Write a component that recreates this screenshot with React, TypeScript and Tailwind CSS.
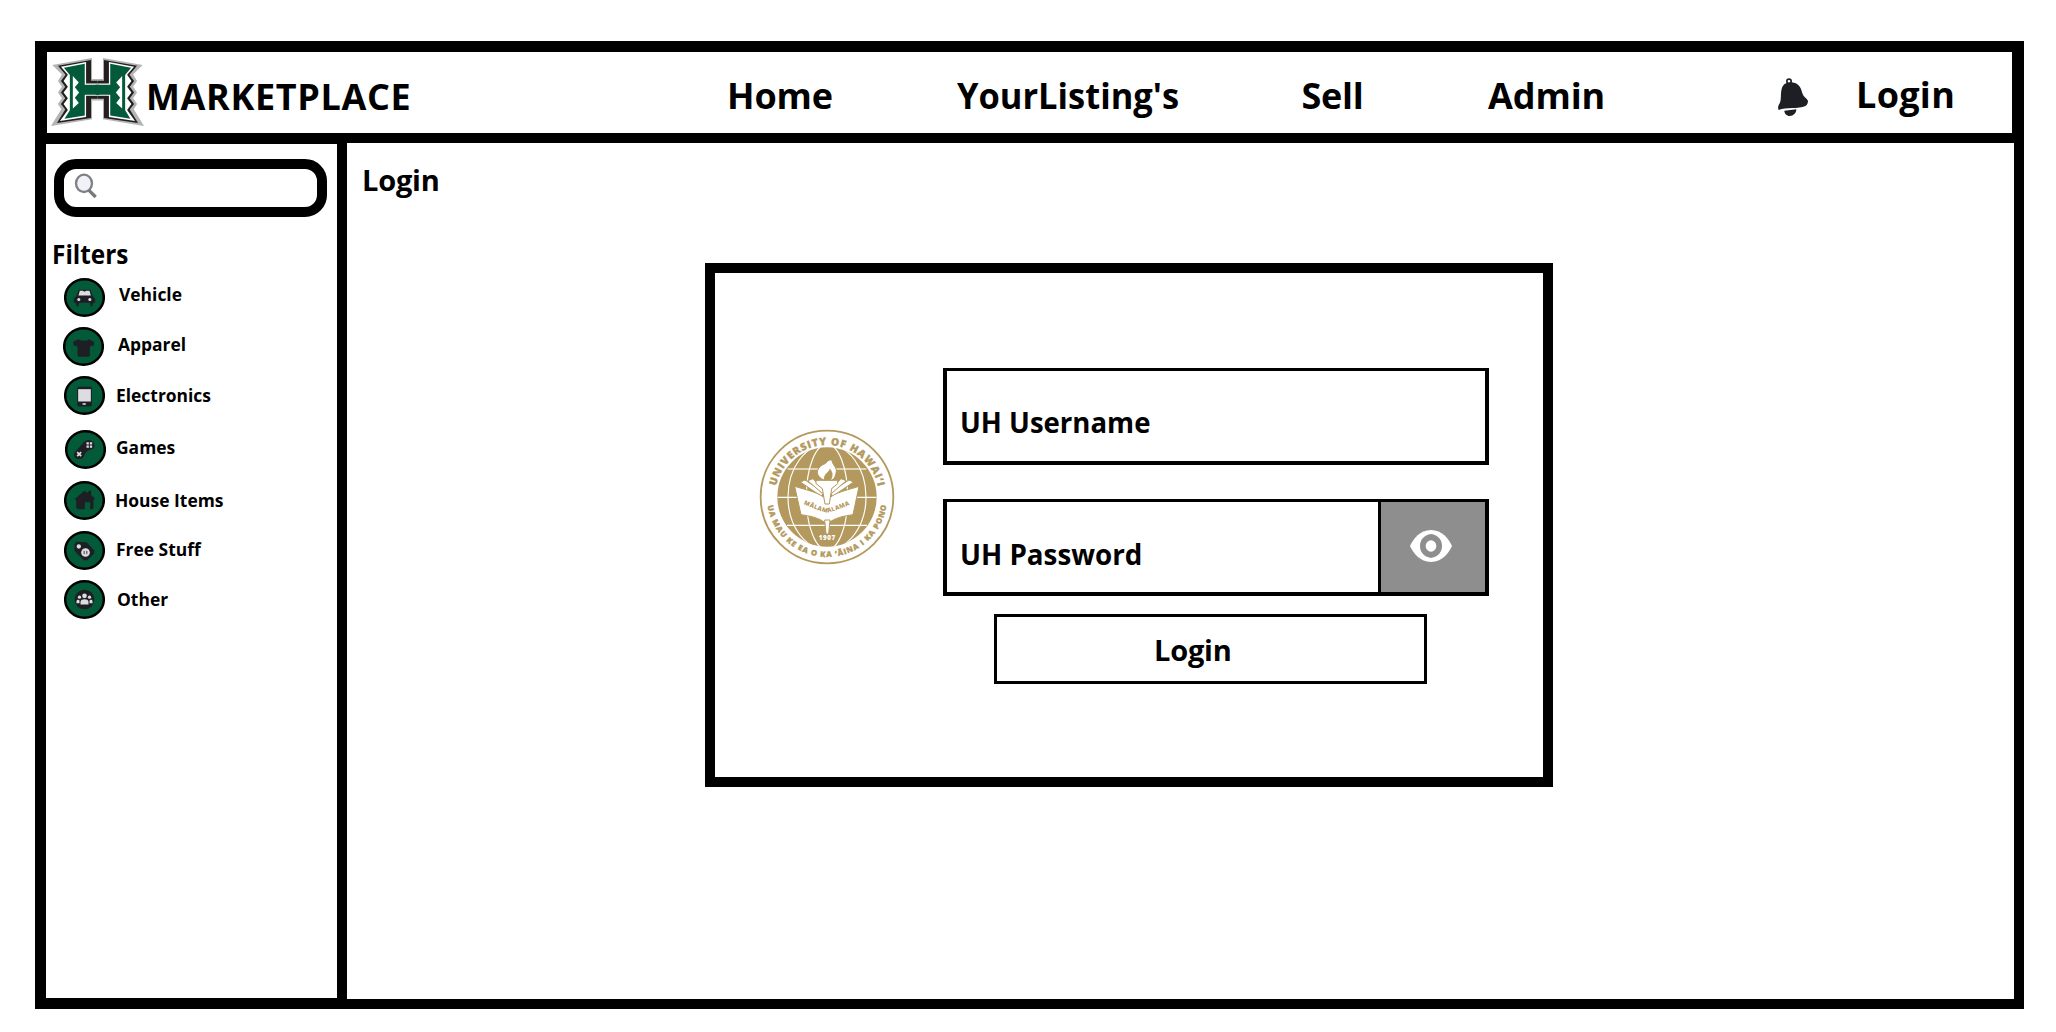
import type { ReactNode } from "react";

const INK = "#1e1f24";
const LIGHT = "#dcdde1";
const GOLD = "#b3995d";

function HawaiiLogo() {
  const half = (
    <>
      <path fill="#b4b4b4" d="M187 85 L67 106 L96 134 L84 154 L96 171 L84 188 L96 205 L84 222 L94 238 L63 288 L187 268 V212 H204 V148 H187 Z" />
      <path fill="#231f20" d="M184 91 L84 108 L107 135 L93 154 L106 171 L93 188 L106 205 L93 222 L106 239 L81 279 L184 264 V207 H204 V153 H184 Z" />
      <path fill="#fff" d="M169 97 L93 111 L114 135 L101 154 L114 171 L101 188 L114 205 L101 222 L114 240 L90 273 L169 261 V198 H204 V161 H169 Z" />
      <path fill="#025a3a" d="M165 102 L102 114 L120 136 V241 L104 266 L165 257 V195 H204 V165 H165 Z" />
      <path fill="#fff" d="M129 139 L147 158 L135 172 L148 188 L135 204 L147 219 L129 236 Z" />
    </>
  );
  return (
    <svg className="block h-[68px] w-[93px]" viewBox="63 85 281 203" preserveAspectRatio="none">
      {half}
      <g transform="translate(407 0) scale(-1 1)">{half}</g>
      <path fill="#025a3a" d="M198 165 H209 V195 H198 Z" />
    </svg>
  );
}

function Bell() {
  return (
    <svg className="block h-[39px] w-[32px]" viewBox="174 145 96 117">
      <circle cx="210" cy="155" r="6.5" fill="none" stroke={INK} strokeWidth="5" />
      <path fill={INK} d="M192 168 C197 160 208 158 219 158 C236 160 246 171 250 191 C253 201 262 205 267 213 C267 220 264 226 259 229 C239 239 201 232 179 241 C176 235 177 229 182 221 C189 208 182 184 192 168 Z" />
      <path fill={INK} d="M196 243 L232 239 C232 251 223 259 212 259 C203 258 196 252 196 243 Z" />
    </svg>
  );
}

function Magnifier() {
  return (
    <svg className="block h-[26px] w-[24px]" viewBox="133 428 72 78">
      <ellipse cx="163" cy="459" rx="24" ry="26" fill="#f1f2f7" stroke="#808086" strokeWidth="7" />
      <path d="M178 480 L198 500" stroke="#77777c" strokeWidth="10" />
    </svg>
  );
}

function Badge({ children }: { children: ReactNode }) {
  return (
    <svg className="block h-[39px] w-[41px] shrink-0" viewBox="-61.5 -58.5 123 117">
      <ellipse rx="58" ry="54.5" fill="#025a38" stroke="#000" strokeWidth="7.500" />
      {children}
    </svg>
  );
}

const car = (
  <>
    <path fill={INK} d="M-17 -23 H18 L25 -4 L32 4 V14 L26 17 L23 27 H19 L16 16 H-16 L-19 27 H-23 L-26 17 L-32 14 V4 L-25 -4 Z" />
    <path fill={LIGHT} d="M-14 -20 H-5 L0 -17 L5 -20 H15 L19 -6 H-18 Z" />
    <circle cx="-17" cy="6" r="4.5" fill={LIGHT} />
    <circle cx="16" cy="6" r="4.5" fill={LIGHT} />
  </>
);

const shirt = (
  <path fill={INK} d="M-15 -22 L-8 -18 H10 L17 -22 L31 -14 L32 -4 L19 0 V28 L15 31 H-14 L-18 28 V0 L-30 -4 L-31 -14 Z" />
);

const tablet = (
  <>
    <rect x="-22" y="-26" width="44" height="59" rx="5" fill={INK} />
    <rect x="-19" y="-19" width="38" height="37" fill={LIGHT} />
    <ellipse cx="-1" cy="25.500" rx="6" ry="2.500" fill="#fff" />
  </>
);

const gamepad = (
  <>
    <path fill={INK} d="M-30 6 L-8 -19 C-2 -26 5 -29 13 -28 C25 -26 28 -16 26 -7 C22 2 10 -1 3 7 C-3 13 -3 22 -10 27 C-18 30 -31 29 -34 20 C-35 15 -33 10 -30 6 Z" />
    <path stroke={LIGHT} strokeWidth="5" d="M-25 8 L-13 20 M-13 8 L-25 20" />
    <path fill={LIGHT} d="M3 -22 h7 v7 h-7 z M13 -22 h7 v7 h-7 z M3 -12 h7 v7 h-7 z M13 -12 h7 v7 h-7 z" />
  </>
);

const house = (
  <path fill={INK} d="M-30 -4 L0 -29 L8 -23 L14 -29 H20 V-16 L31 -6 L27 -2 V22 L24 26 H17 V5 H1 V26 H-20 L-25 21 V-2 Z" />
);

const tag = (
  <>
    <path fill={INK} d="M-30 -19 L-24 -26 L6 -25 L29 -1 V9 L8 29 H-2 L-30 1 Z" />
    <circle cx="-17" cy="-12" r="6.500" fill={LIGHT} />
    <circle cx="3" cy="6" r="13" fill={LIGHT} />
    <path stroke={INK} strokeWidth="2.500" fill="none" d="M-1 1 V11 M7 1 V11" />
  </>
);

const people = (
  <>
    <circle r="29.500" fill={INK} />
    <g fill={LIGHT}>
      <circle cx="0" cy="-11" r="7" />
      <circle cx="-15" cy="-7" r="5" />
      <circle cx="15" cy="-7" r="5" />
      <path d="M-12 15 V7 C-12 -3 12 -3 12 7 V15 Z" />
      <path d="M-24 11 V5 C-23 0 -17 0 -15 3 V11 Z" />
      <path d="M24 11 V5 C23 0 17 0 15 3 V11 Z" />
    </g>
  </>
);

const filters = [
  { label: "Vehicle", icon: car, row: "ml-[18px]", text: "ml-[14px]" },
  { label: "Apparel", icon: shirt, row: "ml-[17px] mt-[10px]", text: "ml-[14px] mt-px" },
  { label: "Electronics", icon: tablet, row: "ml-[18px] mt-[10px]", text: "ml-[11px] mt-[3px]" },
  { label: "Games", icon: gamepad, row: "ml-[19px] mt-[15px]", text: "ml-[10px] mt-[0.500px]" },
  { label: "House Items", icon: house, row: "ml-[18px] mt-[12px]", text: "ml-[10px] mt-[3px]" },
  { label: "Free Stuff", icon: tag, row: "ml-[18px] mt-[11px]", text: "ml-[11px] mt-[2px]" },
  { label: "Other", icon: people, row: "ml-[18px] mt-[10px]", text: "ml-[12px] mt-[3px]" },
];

function Seal() {
  return (
    <svg className="block h-[136px] w-[136px]" viewBox="26 27 408 408">
      <defs>
        <path id="seal-top" d="M74 231 A156 156 0 0 1 386 231" />
        <path id="seal-bottom" d="M50 231 A180 180 0 0 0 410 231" />
        <path id="seal-motto" d="M156 250 Q196 270 230 278 Q266 270 306 250" />
        <clipPath id="seal-disc"><circle cx="230" cy="231" r="149" /></clipPath>
      </defs>
      <circle cx="230" cy="231" r="199" fill="#fff" stroke={GOLD} strokeWidth="5.500" />
      <circle cx="230" cy="231" r="149" fill={GOLD} />
      <g clipPath="url(#seal-disc)" fill="none" stroke="#fff" strokeWidth="3.500">
        <path strokeWidth="5" stroke="#efe7d8" d="M112 147 H348" />
        <path d="M81 232 H379 M110 316 H350" />
        <ellipse cx="230" cy="231" rx="117" ry="158" />
        <ellipse cx="230" cy="231" rx="62" ry="158" />
      </g>
      <g fill="#fff" stroke={GOLD} strokeWidth="3">
        <path d="M150 186 L164 180 L222 218 L212 228 Z" />
        <path d="M172 182 L188 176 L222 212 L216 220 Z" />
        <path d="M310 186 L296 180 L238 218 L248 228 Z" />
        <path d="M288 182 L272 176 L238 212 L244 220 Z" />
        <path d="M133 199 C166 210 207 216 230 240 C253 216 294 210 326 199 L308 284 C283 288 252 292 230 313 C208 292 177 288 152 284 Z" />
        <path d="M197 181 H262 V191 L244 206 L237 252 H224 L216 206 L197 191 Z" />
        <path d="M223 181 C195 170 194 145 220 133 C233 128 229 118 245 120 C244 133 263 143 257 160 C254 175 246 181 240 181 C248 166 246 158 239 148 C235 160 219 162 223 181 Z" />
        <path d="M223 300 H239 L235 342 H227 Z" />
      </g>
      <g fill={GOLD} stroke={GOLD} strokeWidth="1" fontFamily="Open Sans, sans-serif" fontWeight="800">
        <text fontSize="31"><textPath href="#seal-top" startOffset="33" textLength="425">UNIVERSITY OF HAWAI‘I</textPath></text>
        <text fontSize="23"><textPath href="#seal-bottom" startOffset="26" textLength="514">UA MAU KE EA O KA ‘ĀINA I KA PONO</textPath></text>
        <text fontSize="18" strokeWidth="0"><textPath href="#seal-motto" startOffset="4" textLength="148">MĀLAMALAMA</textPath></text>
        <text x="230" y="361" fontSize="19" strokeWidth="0" textAnchor="middle" textLength="50" fill="#fff">1907</text>
      </g>
    </svg>
  );
}

function Eye() {
  return (
    <svg className="block h-[32px] w-[42px]" viewBox="150 152 126 94" preserveAspectRatio="none">
      <path fill="#fff" d="M150 199 C160 178 180 152 213 152 C246 152 266 178 276 199 C266 220 246 246 213 246 C180 246 160 220 150 199 Z" />
      <path fill="#8e8e8e" d="M213 164 C235 167 246 182 246 199 C246 216 235 231 213 234 C191 231 180 216 180 199 C180 182 191 167 213 164 Z" />
      <ellipse cx="213" cy="199" rx="16" ry="17" fill="#fff" />
    </svg>
  );
}

export default function App() {
  return (
    <div className="h-[1032px] w-[2056px] overflow-hidden bg-white pt-[41px] pl-[35px] font-['Open_Sans',sans-serif] font-bold whitespace-nowrap text-black">
      <div className="flex h-[968px] w-[1989px] flex-col bg-black pb-[10px]">
        <header className="mt-[11px] ml-[12px] flex h-[81px] w-[1965px] shrink-0 bg-white text-[36px] leading-[36px]">
          <div className="mt-[6px] ml-[4px] w-[95px]"><HawaiiLogo /></div>
          <div className="mt-[27px] w-[581px] tracking-[0.640px]">MARKETPLACE</div>
          <nav className="mt-[26px] flex">
            <a className="w-[229.500px] tracking-[-0.150px]">Home</a>
            <a className="w-[345px] origin-left scale-x-[0.957]">YourListing's</a>
            <a className="w-[186.500px] tracking-[-0.300px]">Sell</a>
            <a className="w-[288.500px] tracking-[-0.100px]">Admin</a>
          </nav>
          <div className="mt-[26px] w-[79.500px]"><Bell /></div>
          <a className="mt-[25px] tracking-[0.300px]">Login</a>
        </header>
        <div className="mt-[10px] ml-[11px] flex min-h-0 grow gap-[10px]">
          <aside className="mt-px mb-px w-[291px] bg-white">
            <div className="mt-[15px] ml-[8px] flex h-[58px] w-[273px] rounded-[22px] border-[10px] border-black pt-[4px] pl-[10px]">
              <Magnifier />
            </div>
            <h2 className="mt-[21px] ml-[5.500px] h-[40px] origin-left scale-x-[0.887] text-[27.500px] leading-[32px]">Filters</h2>
            <ul className="text-[18px] leading-[32px]">
              {filters.map((f) => (
                <li key={f.label} className={`flex h-[39px] items-start ${f.row}`}>
                  <Badge>{f.icon}</Badge>
                  <span className={`origin-left scale-x-[0.968] ${f.text}`}>{f.label}</span>
                </li>
              ))}
            </ul>
          </aside>
          <main className="w-[1667px] bg-white pt-[21px]">
            <h1 className="ml-[15px] h-[99px] text-[29px] leading-[31px] tracking-[-0.200px]">Login</h1>
            <section className="ml-[358px] flex h-[524px] w-[848px] border-[10px] border-black">
              <div className="mt-[156px] ml-[43.500px] w-[184.500px]"><Seal /></div>
              <div className="mt-[95px] text-[29px] leading-[40px]">
                <div className="h-[97px] w-[546px] border-4 border-t-[3px] border-black pt-[31px] pl-[13px]">
                  <span className="inline-block origin-left scale-x-[0.950]">UH Username</span>
                </div>
                <div className="mt-[34px] flex h-[97px] w-[546px] border-4 border-t-[3px] border-black">
                  <div className="w-[431px] pt-[32px] pl-[13px]">
                    <span className="inline-block origin-left scale-x-[0.957]">UH Password</span>
                  </div>
                  <div className="flex grow justify-center border-l-[3px] border-black bg-[#8e8e8e] pt-[28px] pr-[4px]"><Eye /></div>
                </div>
                <button className="mt-[18px] ml-[51px] flex h-[70px] w-[433px] border-[3px] border-black pt-[13px] pl-[157px] tracking-[-0.200px]">Login</button>
              </div>
            </section>
          </main>
        </div>
      </div>
    </div>
  );
}
